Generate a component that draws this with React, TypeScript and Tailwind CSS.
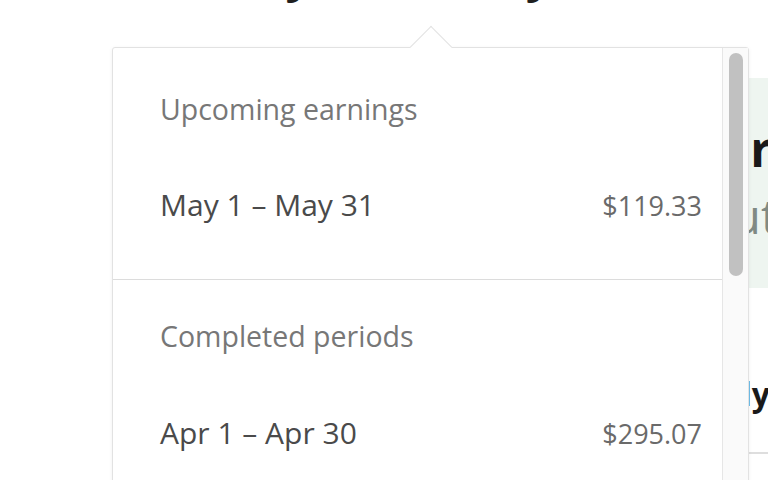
import React from "react";

export default function App() {
  return (
    <div className="relative h-[480px] w-[768px] overflow-hidden bg-white font-['Open_Sans',sans-serif]">
      {/* background page */}
      <h1 className="-mt-[51px] pl-[112px] text-[48px] font-bold leading-[48px] text-[#1f1f1f] whitespace-nowrap">
        Monthly summary
      </h1>
      <div className="flex justify-end">
        <div className="w-[300px] mt-[81px] flex flex-col">
          <div className="h-[210px] bg-[#eef5f0] pt-[43px] flex flex-col items-end">
            <div className="-mr-[4px] text-[48px] font-bold leading-[56px] text-[#1a1a1a] whitespace-nowrap">
              Earnings for
            </div>
            <div className="mt-[11px] -mr-[10px] text-[48px] leading-[56px] text-[#808a84] whitespace-nowrap">
              Total payout
            </div>
          </div>
          <div className="mt-[86px] flex justify-end">
            <div className="-mr-[2px] text-[32px] font-bold leading-[40px] text-[#1a1a1a] whitespace-nowrap">
              Monthly
            </div>
          </div>
          <div className="mt-[38px] h-[2px] bg-[#dedede]" />
        </div>
      </div>

      {/* popover */}
      <div className="absolute left-[112px] top-[47px] flex h-[480px] w-[637px] rounded-[3px] border border-[#e2e2e2] bg-white shadow-[0_1px_4px_rgba(0,0,0,0.06)]">
        <div className="absolute -top-[16px] left-[303px] h-[30px] w-[30px] rotate-45 border-l border-t border-[#e2e2e2] bg-white" />
        <div className="relative flex flex-1 flex-col">
          <div className="border-b border-[#dcdcdc] pl-[47px] pr-[20px] pt-[44px] pb-[55px]">
            <div className="text-[28.5px] leading-[34px] text-[#777777]">Upcoming earnings</div>
            <div className="mt-[61px] flex items-baseline justify-between">
              <span className="text-[30px] leading-[36px] text-[#4a4a4a]">May 1 – May 31</span>
              <span className="text-[27px] leading-[36px] text-[#6a6a6a]">$119.33</span>
            </div>
          </div>
          <div className="pl-[47px] pr-[20px] pt-[39px]">
            <div className="text-[28.5px] leading-[34px] text-[#777777]">Completed periods</div>
            <div className="mt-[62px] flex items-baseline justify-between">
              <span className="text-[30px] leading-[36px] text-[#4a4a4a]">Apr 1 – Apr 30</span>
              <span className="text-[27px] leading-[36px] text-[#6a6a6a]">$295.07</span>
            </div>
          </div>
        </div>
        <div className="relative flex w-[26px] justify-center border-l border-[#e6e6e6] bg-[#fafafa] pt-[5px]">
          <div className="h-[223px] w-[14px] rounded-full bg-[#c1c1c1]" />
        </div>
      </div>
    </div>
  );
}
